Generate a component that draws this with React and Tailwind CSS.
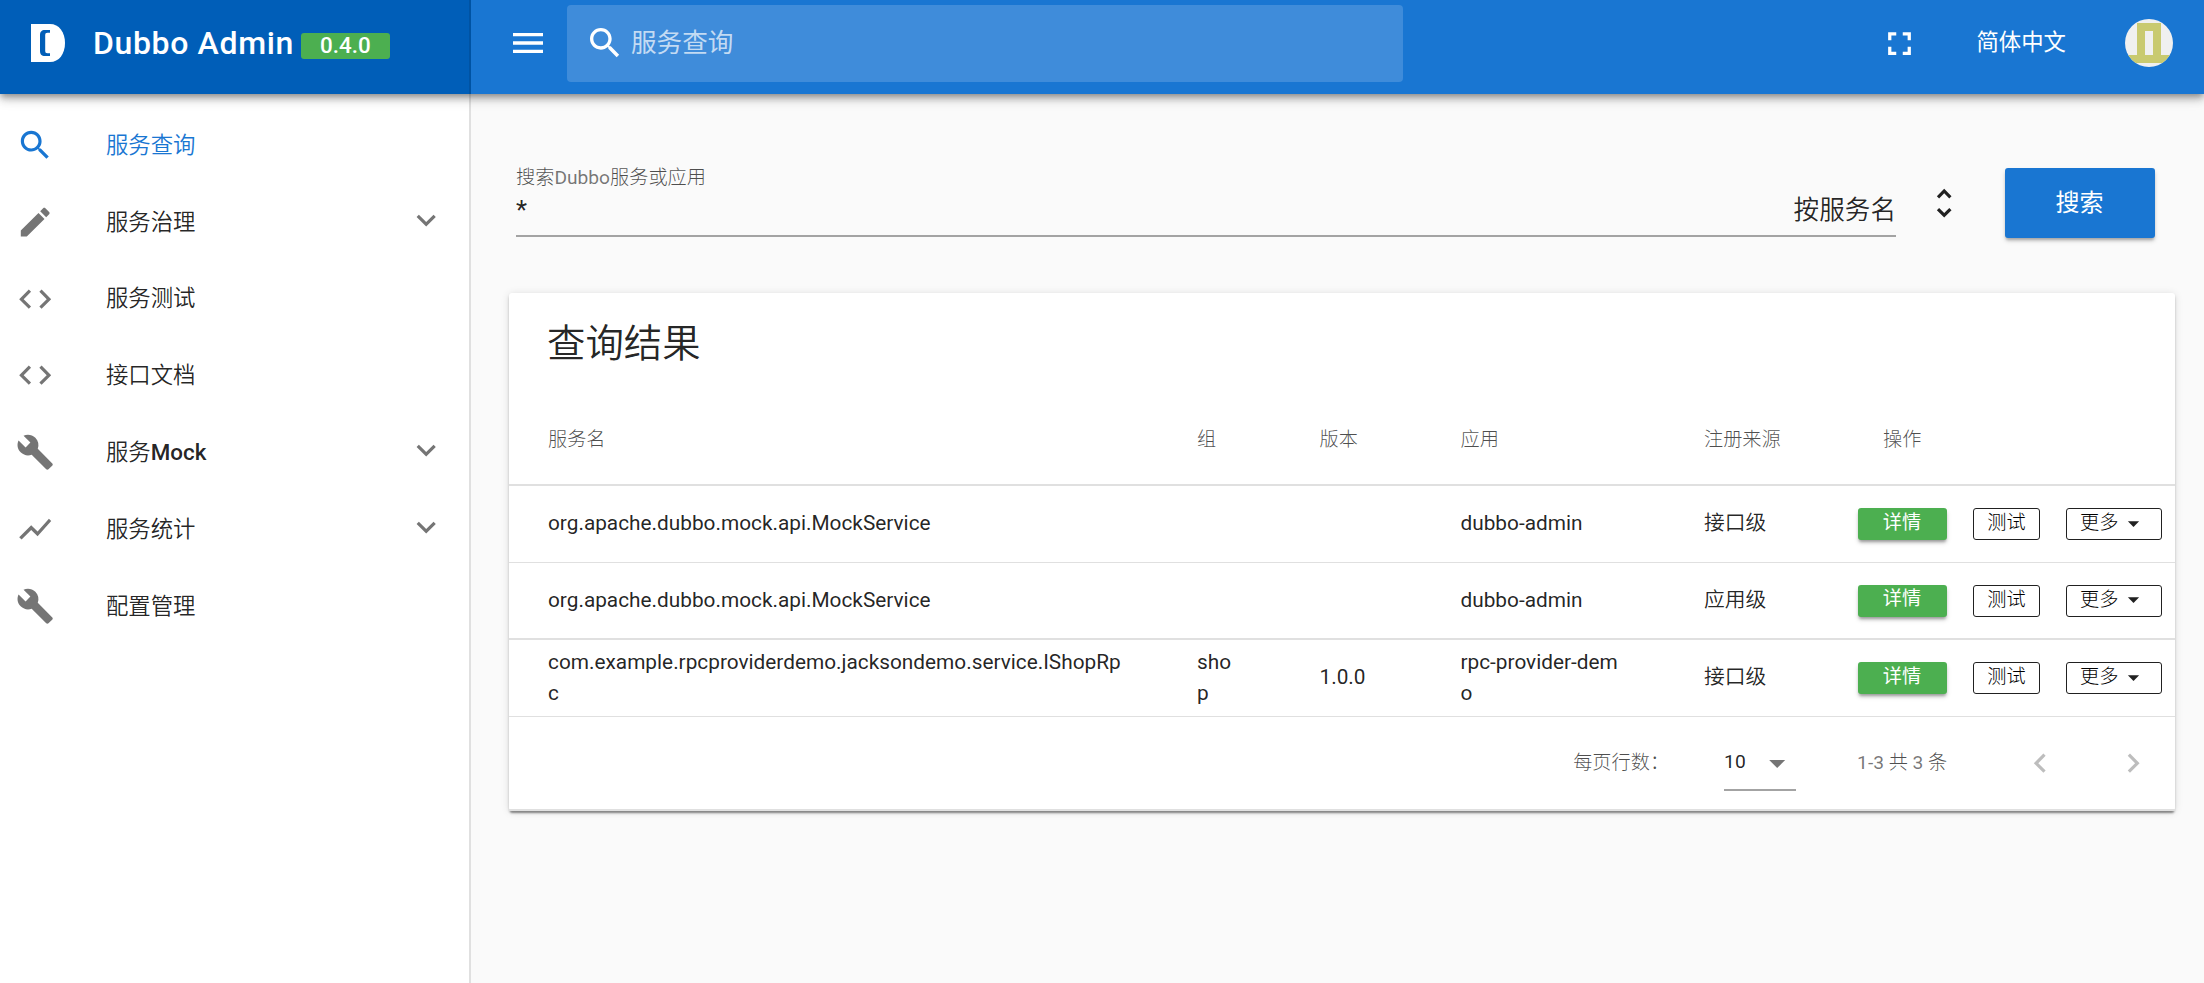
import React from 'react';
import clsx from 'clsx';

const icons = {
  menu: 'M3 18h18v-2H3v2zm0-5h18v-2H3v2zm0-7v2h18V6H3z',
  search:
    'M15.5 14h-.79l-.28-.27C15.41 12.59 16 11.11 16 9.5 16 5.91 13.09 3 9.5 3S3 5.91 3 9.5 5.91 16 9.5 16c1.61 0 3.09-.59 4.23-1.57l.27.28v.79l5 4.99L20.49 19l-4.99-5zm-6 0C7.01 14 5 11.99 5 9.5S7.01 5 9.5 5 14 7.01 14 9.5 11.99 14 9.5 14z',
  edit: 'M3 17.25V21h3.75L17.81 9.94l-3.75-3.75L3 17.25zM20.71 7.04c.39-.39.39-1.02 0-1.41l-2.34-2.34c-.39-.39-1.02-.39-1.41 0l-1.83 1.83 3.75 3.75 1.83-1.83z',
  code: 'M9.4 16.6L4.8 12l4.6-4.6L8 6l-6 6 6 6 1.4-1.4zm5.2 0l4.6-4.6-4.6-4.6L16 6l6 6-6 6-1.4-1.4z',
  build:
    'M22.7 19l-9.1-9.1c.9-2.3.4-5-1.5-6.9-2-2-5-2.4-7.4-1.3L9 6 6 9 1.6 4.7C.4 7.1.9 10.1 2.9 12.1c1.9 1.9 4.6 2.4 6.9 1.5l9.1 9.1c.4.4 1 .4 1.4 0l2.3-2.3c.5-.4.5-1.1.1-1.4z',
  chart: 'M3.5 18.49l6-6.01 4 4L22 6.92l-1.41-1.41-7.09 7.97-4-4L2 16.99z',
  down: 'M7.41 8.59L12 13.17l4.59-4.58L18 10l-6 6-6-6 1.41-1.41z',
  left: 'M15.41 7.41L14 6l-6 6 6 6 1.41-1.41L10.83 12z',
  right: 'M10 6L8.59 7.41 13.17 12l-4.58 4.59L10 18l6-6z',
  fullscreen:
    'M7 14H5v5h5v-2H7v-3zm-2-4h2V7h3V5H5v5zm12 7h-3v2h5v-5h-2v3zM14 5v2h3v3h2V5h-5z',
  unfold:
    'M12 5.83L15.17 9l1.41-1.41L12 3 7.41 7.59 8.83 9 12 5.83zm0 12.34L8.83 15l-1.41 1.41L12 21l4.59-4.59L15.17 15 12 18.17z',
  caret: 'M7 10l5 5 5-5z',
};

const Icon = ({ name, className = 'size-[38.4px]' }) => (
  <svg viewBox="0 0 24 24" fill="currentColor" aria-hidden="true" className={clsx('shrink-0', className)}>
    <path d={icons[name]} />
  </svg>
);

const navItems = [
  { icon: 'search', title: '服务查询', active: true },
  { icon: 'edit', title: '服务治理', group: true },
  { icon: 'code', title: '服务测试' },
  { icon: 'code', title: '接口文档' },
  { icon: 'build', title: '服务', latin: 'Mock', group: true },
  { icon: 'chart', title: '服务统计', group: true },
  { icon: 'build', title: '配置管理' },
];

const services = [
  {
    service: 'org.apache.dubbo.mock.api.MockService',
    group: '',
    version: '',
    app: 'dubbo-admin',
    source: '接口级',
    border: 'border-b',
  },
  {
    service: 'org.apache.dubbo.mock.api.MockService',
    group: '',
    version: '',
    app: 'dubbo-admin',
    source: '应用级',
    border: 'border-b-2',
  },
  {
    service: 'com.example.rpcproviderdemo.jacksondemo.service.IShopRpc',
    group: 'shop',
    version: '1.0.0',
    app: 'rpc-provider-demo',
    source: '接口级',
    border: 'border-b',
  },
];

const columns = 'grid grid-cols-[650px_122.5px_141px_243.5px_1fr] items-center';

const Logo = () => (
  <svg viewBox="0 0 34 38" className="w-[34px] h-[38px] shrink-0" aria-hidden="true">
    <path d="M0 0h19c9 0 15 8 15 19s-6 19-15 19H0z" fill="#fff" />
    <path
      d="M19 6h-5c-3.500 0-5 2-5 5v16c0 3 1.500 5 5 5h5v-2.800h-2.500c-1.700 0-2.300-.8-2.300-2.500V11.300c0-1.700.6-2.500 2.300-2.500H19z"
      fill="#005eb8"
    />
  </svg>
);

const Avatar = () => (
  <svg viewBox="0 0 48 48" className="size-12 shrink-0 rounded-full bg-[#f0f0f0]" aria-hidden="true">
    <path d="M12 4h24v32h12v8H0v-8h12zM20 12v24h8V12z" fill="#c9ca70" fillRule="evenodd" />
  </svg>
);

const Header = () => (
  <header className="relative z-10 flex h-[94px] bg-[#1976d2] text-white shadow-[0_3px_6px_-1px_rgba(0,0,0,0.3),0_6px_8px_0_rgba(0,0,0,0.16),0_2px_16px_0_rgba(0,0,0,0.12)]">
    <div className="flex h-full w-[471px] items-center border-r-2 border-[#0053a3] bg-[#005eb8] pb-2 pl-[31px]">
      <Logo />
      <span className="ml-[28px] text-[32px] font-medium tracking-[0.64px] whitespace-nowrap">Dubbo Admin</span>
      <span className="mt-[6px] ml-[7px] flex h-[26px] w-[89px] items-center justify-center rounded-[3px] bg-[#4caf50] text-[22.4px] font-medium">
        0.4.0
      </span>
    </div>
    <div className="flex flex-1 items-center pr-[31px] pb-2 pl-[37px]">
      <Icon name="menu" className="size-10" />
      <div className="ml-[19px] flex h-[77px] w-[836px] items-center rounded-[4px] bg-[#3f8cda] pl-[18px]">
        <Icon name="search" className="size-10" />
        <span className="ml-[6px] pt-px text-[25.6px] font-normal text-white/70">服务查询</span>
      </div>
      <Icon name="fullscreen" className="ml-auto size-[39px]" />
      <span className="ml-[57px] text-[22.4px]">简体中文</span>
      <div className="ml-[59px]">
        <Avatar />
      </div>
    </div>
  </header>
);

const Sidebar = () => (
  <nav className="w-[471px] shrink-0 border-r-2 border-[#e0e0e0] bg-white pt-[12.8px]">
    {navItems.map((item) => (
      <a
        key={item.title + (item.latin || '')}
        className={clsx(
          'flex h-[76.8px] items-center pr-[24px] pl-[16px] text-[22.4px] font-[350]',
          item.active ? 'text-[#1976d2]' : 'text-black/87'
        )}
      >
        <Icon name={item.icon} className={clsx('size-[38.4px]', !item.active && 'text-[#757575]')} />
        <span className="ml-[51.5px] flex-1 pt-px">
          {item.title}
          {item.latin && <span className="font-medium">{item.latin}</span>}
        </span>
        {item.group && <Icon name="down" className="mb-[4px] size-[38.4px] text-[#757575]" />}
      </a>
    ))}
  </nav>
);

const SearchBar = () => (
  <div className="flex h-[70px] items-start pr-[20px] pl-[7px]">
    <div className="h-[69px] w-[1380px] border-b-2 border-[#a3a3a3]">
      <div className="-mt-[3px] text-[19.2px] leading-[26px] font-light text-black/70">
        搜索<span className="font-normal text-black/54">Dubbo</span>服务或应用
      </div>
      <div className="flex justify-between text-[25.6px] leading-[38px] text-black/87">
        <span>*</span>
        <span className="font-[350]">按服务名</span>
      </div>
    </div>
    <Icon name="unfold" className="mt-[16px] ml-[29px] size-[38.4px] text-black/87" />
    <button className="ml-auto h-[70px] w-[150px] rounded-[3px] bg-[#1976d2] pr-px text-[24px] text-white shadow-[0_3px_3px_-1px_rgba(0,0,0,0.25),0_3px_5px_0_rgba(0,0,0,0.14)]">
      搜索
    </button>
  </div>
);

const Actions = () => (
  <div className="flex pl-[192px] text-[19.2px] leading-[28px]">
    <button className="h-8 w-[89px] rounded-[3px] bg-[#4caf50] pr-px pb-[3px] text-white shadow-[0_3px_3px_-1px_rgba(0,0,0,0.3),0_3px_5px_0_rgba(0,0,0,0.14)]">
      详情
    </button>
    <button className="ml-[26px] h-8 w-[67px] rounded-[3px] border border-[#212121] pb-[3px] leading-[27px] font-light text-black">
      测试
    </button>
    <button className="ml-[26px] flex h-8 w-[96px] items-center rounded-[3px] border border-[#212121] pb-[2px] pl-[13px] font-light text-black">
      更多
      <Icon name="caret" className="ml-[2px] size-[27px] text-[#212121]" />
    </button>
  </div>
);

const ResultTable = () => (
  <div className="text-[20.8px] text-black/87">
    <div className={clsx(columns, 'h-[95px] border-b-2 border-[#e0e0e0] pt-[5px] text-[19.2px] font-light text-black/70')}>
      <span className="pl-[39px]">服务名</span>
      <span className="pl-[38px]">组</span>
      <span className="pl-[38px]">版本</span>
      <span className="pl-[38px]">应用</span>
      <div className="flex pl-[38px]">
        <span className="w-[179px]">注册来源</span>
        <span>操作</span>
      </div>
    </div>
    {services.map((item, i) => (
      <div key={i} className={clsx(columns, 'h-[77px] border-[#e0e0e0] leading-[31.2px]', item.border)}>
        <span className="pr-[36px] pl-[39px] break-all">{item.service}</span>
        <span className="pr-[42px] pl-[38px] break-all">{item.group}</span>
        <span className="pl-[38px]">{item.version}</span>
        <span className="px-[38px] break-all">{item.app}</span>
        <div className="flex items-center">
          <span className="-mr-[100px] w-[100px] pl-[38px] font-[350] whitespace-nowrap">{item.source}</span>
          <Actions />
        </div>
      </div>
    ))}
    <div className="flex h-[94px] items-center border-b-2 border-[#e0e0e0] pr-[23px] text-[19.2px] font-light text-black/70">
      <span className="ml-auto">每页行数：</span>
      <div className="mt-[16px] ml-[55px] flex h-[40px] w-[72px] items-start justify-between border-b-2 border-[#a3a3a3] font-normal text-black/87">
        <span className="leading-[22px]">10</span>
        <Icon name="caret" className="-mt-[7px] size-[38.4px] text-black/54" />
      </div>
      <span className="ml-[61px]">
        <span className="font-normal text-black/54">1-3</span> 共{' '}
        <span className="font-normal text-black/54">3</span> 条
      </span>
      <Icon name="left" className="ml-[74px] size-[38.4px] text-black/26" />
      <Icon name="right" className="ml-[54px] size-[38.4px] text-black/26" />
    </div>
  </div>
);

const App = () => (
  <div className="h-[983px] w-[2204px] overflow-hidden bg-[#fafafa] font-['Roboto','Noto_Sans_CJK_SC',sans-serif]">
    <Header />
    <div className="flex h-[889px]">
      <Sidebar />
      <main className="flex-1 pt-[74px] pr-[29px] pl-[38px]">
        <SearchBar />
        <section className="mt-[55px] rounded-[3px] bg-white shadow-[0_3px_2px_-1px_rgba(0,0,0,0.35),0_2px_3px_0_rgba(0,0,0,0.14),0_1px_8px_0_rgba(0,0,0,0.12)]">
          <h2 className="h-[98px] pt-[21px] pl-[38px] text-[38.4px] leading-[60px] font-[350] text-black/87">
            查询结果
          </h2>
          <ResultTable />
        </section>
      </main>
    </div>
  </div>
);

export default App;
